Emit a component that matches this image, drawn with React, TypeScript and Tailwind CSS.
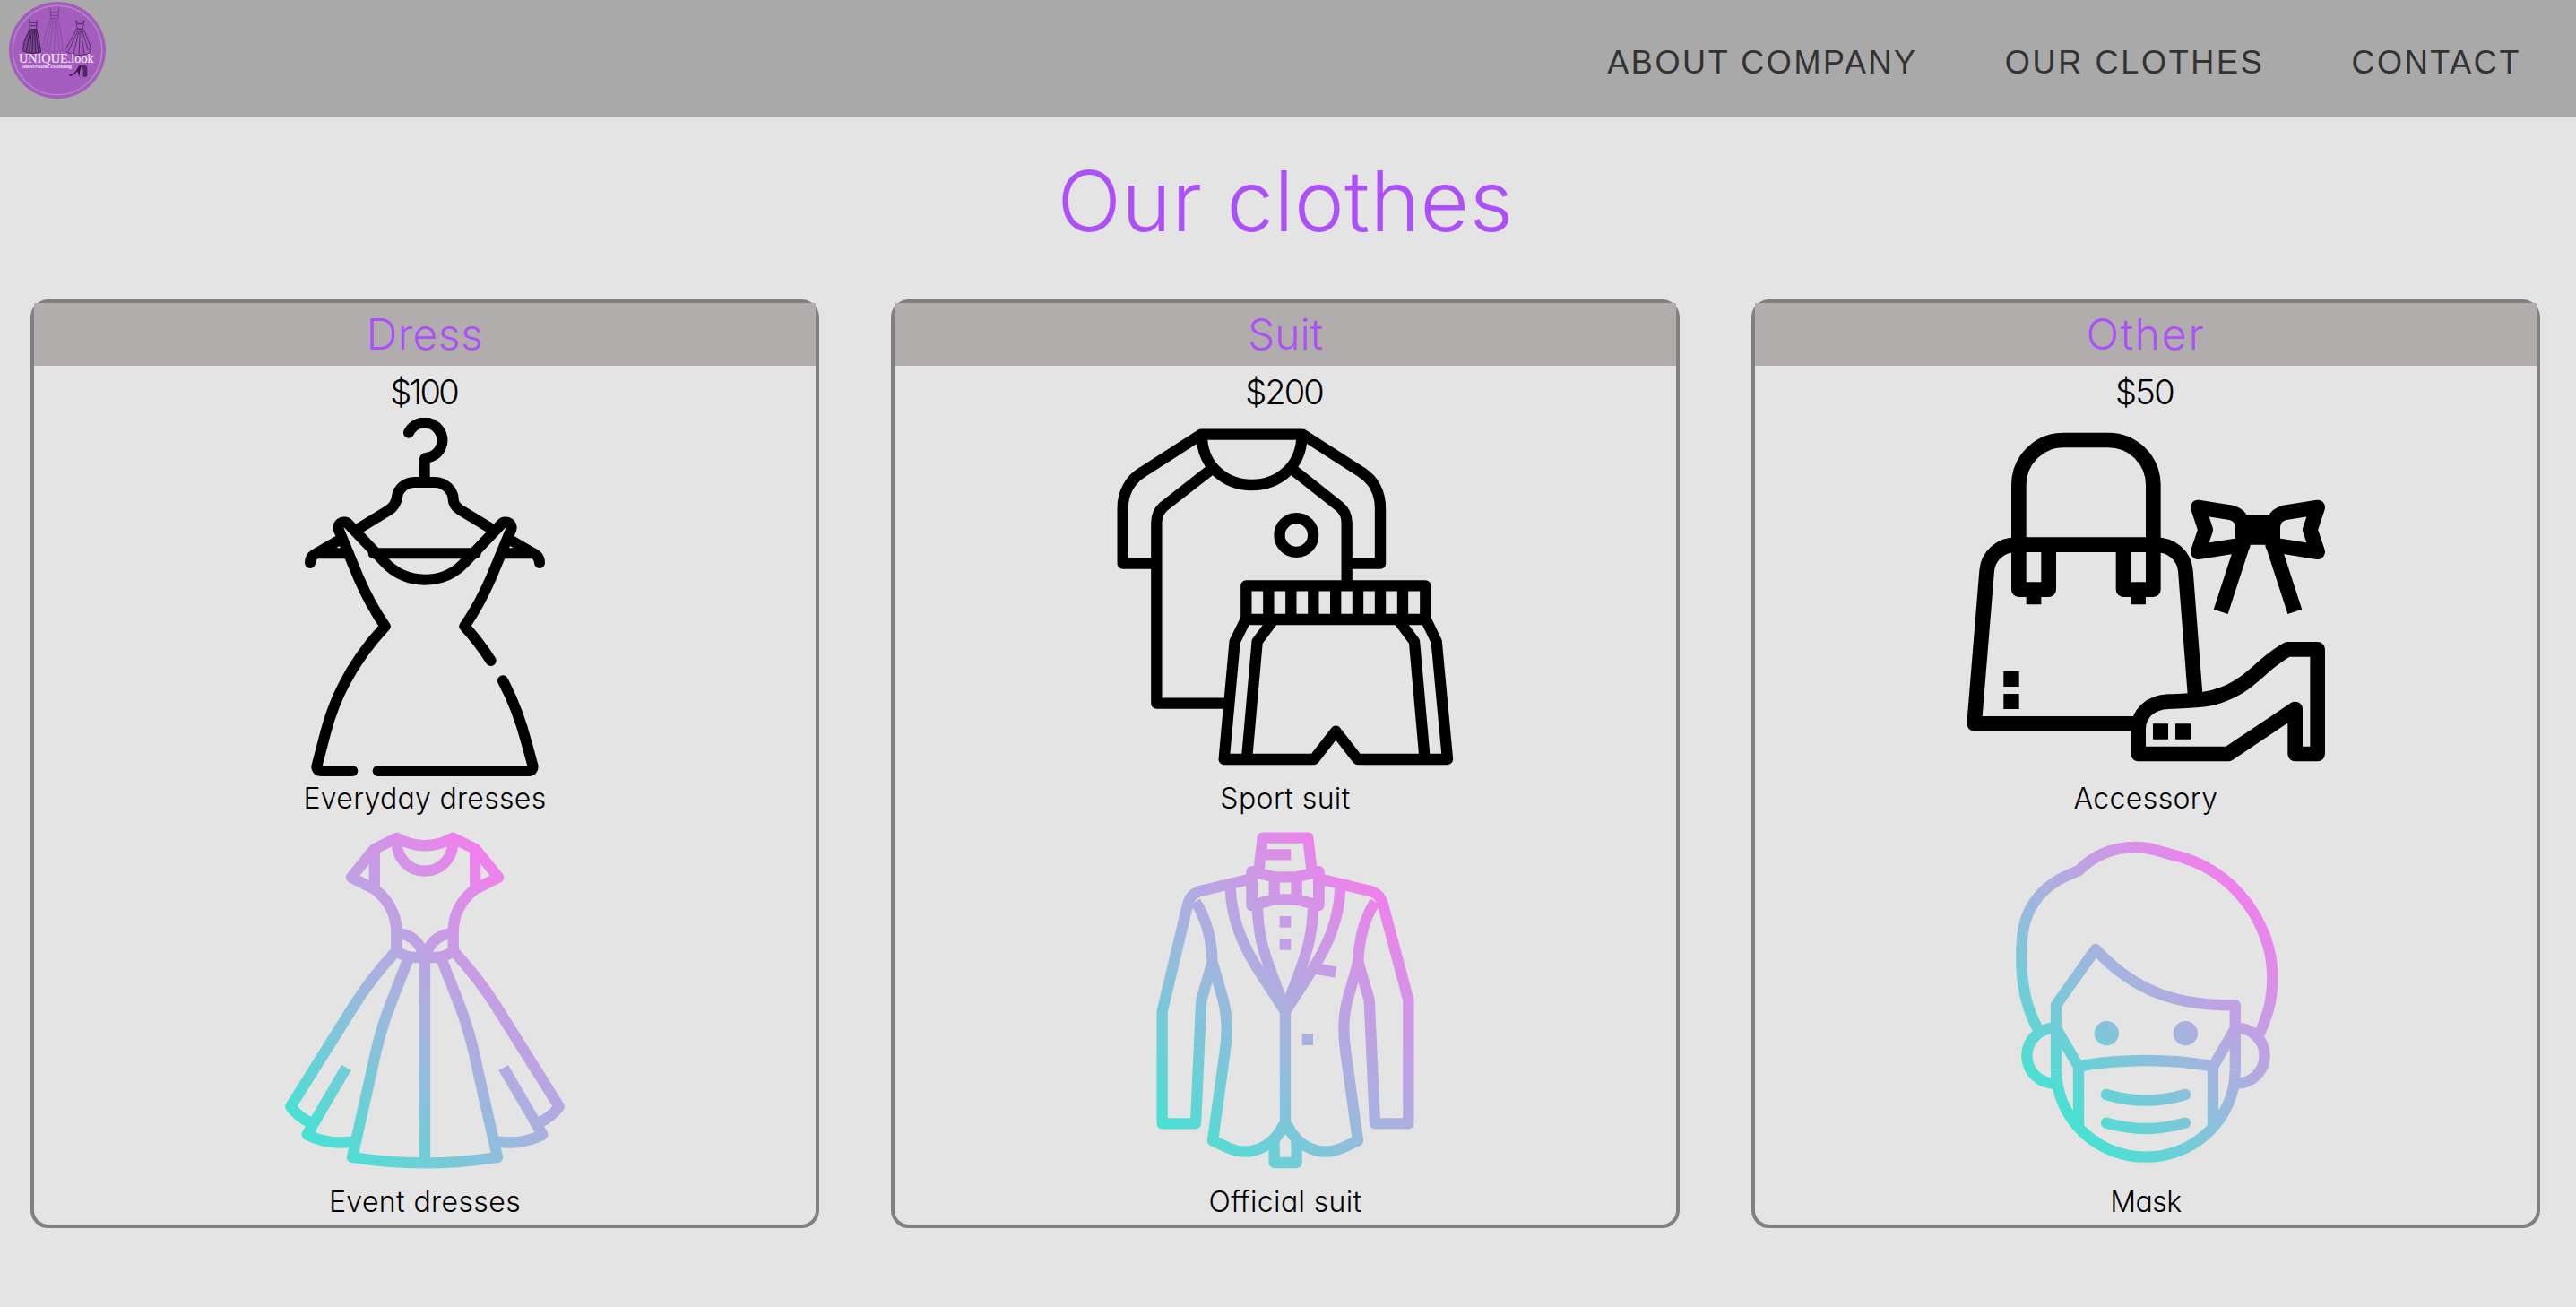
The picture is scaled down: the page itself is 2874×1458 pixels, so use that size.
import React from "react";

type GradientProps = { id: string; x1: number; y1: number; x2: number; y2: number };

function IconGradient({ id, x1, y1, x2, y2 }: GradientProps) {
  return (
    <defs>
      <linearGradient id={id} gradientUnits="userSpaceOnUse" x1={x1} y1={y1} x2={x2} y2={y2}>
        <stop offset="0" stopColor="#46e2d2" />
        <stop offset="0.5" stopColor="#a6b3df" />
        <stop offset="1" stopColor="#f080ec" />
      </linearGradient>
    </defs>
  );
}

function HangerDressIcon() {
  return (
    <svg className="size-[400px]" viewBox="-78 48 1200 1200" fill="none" stroke="#000" strokeWidth="36" strokeLinecap="round" strokeLinejoin="round">
      <path d="M468 98A59 59 0 1 1 528 182Q521 182 521 190V262" />
      <path d="M292 424L400 358C418 347 427 330 429 312C433 285 457 264 487 264H555C590 264 617 292 617 322C618 335 626 347 638 355L752 424" />
      <path d="M236 457L152 506Q138 516 138 534M160 502H266M350 502H692M780 502H886M808 457L892 506Q906 516 906 534" />
      <path d="M389 746Q340 675 300 583L236 428A19 19 0 0 1 267 405L386 530C460 610 584 610 658 530L777 405A19 19 0 0 1 808 428L744 583Q704 675 655 746Q702 797 743 861" />
      <path d="M389 746Q241 905 190 1100L160 1215Q160 1230 175 1230H280" />
      <path d="M783 928Q833 1022 863 1138L884 1215Q884 1230 870 1230H365" />
    </svg>
  );
}

function EventDressIcon() {
  return (
    <svg className="size-[400px]" viewBox="-78 18 1200 1200" fill="none" stroke="url(#g-dress)" strokeWidth="37" strokeLinejoin="round">
      <IconGradient id="g-dress" x1={90} y1={1050} x2={865} y2={275} />
      <path d="M428 74Q522 126 616 74L692 112L768 206L691 245Q617 302 617 390V452Q590 474 556 474H488Q455 474 427 452V390Q427 302 353 245L276 206L352 112Z" />
      <path d="M353.5 110V246M690.5 110V246M429 92A93 93 0 0 0 615 92" />
      <path d="M428 394C470 394 500 418 518 462M616 394C574 394 544 418 526 462" />
      <path d="M427 452Q345 540 285 635L73 973Q98 1008 136 1025" />
      <path d="M617 452Q699 540 759 635L971 973Q946 1008 908 1025" />
      <path d="M259 843L128 1067Q195 1102 280 1091M785 843L916 1067Q849 1102 764 1091" />
      <path d="M465 483L412 618Q370 722 345 850L279 1143Q522 1181 765 1143L699 850Q674 722 632 618L579 483" />
      <path d="M522 460V1162" />
    </svg>
  );
}

function SportSuitIcon() {
  return (
    <svg className="size-[400px]" viewBox="12 18 1200 1200" fill="none" stroke="#000" strokeWidth="37" strokeLinejoin="round">
      <path d="M181 506H68V320C68 270 92 225 134 200L330 74H670L866 200C908 225 930 270 930 320V506H818" />
      <path d="M360 194L205 315Q181 335 181 370V974H420M640 194L793 315Q818 335 818 370V580" />
      <path d="M333 88C338 180 410 243 500 243C590 243 662 180 667 88" />
      <circle cx="649" cy="411" r="56.5" />
      <path d="M481 580H1081V693H481ZM556 580V693M631 580V693M706 580V693M780.500 580V693M855 580V693M930 580V693M1005 580V693" />
      <path d="M481 690L443 767L407 1161H708L781 1067L854 1161H1155L1118 767L1081 690" />
      <path d="M568 700L518 767L483 1161M994 700L1044 767L1079 1161" />
    </svg>
  );
}

function JacketIcon() {
  return (
    <svg className="size-[400px]" viewBox="-108 18 1200 1200" fill="none" stroke="url(#g-jacket)" strokeWidth="37" strokeLinejoin="round">
      <IconGradient id="g-jacket" x1={68} y1={1042} x2={835} y2={275} />
      <path d="M403 190L416 74H568L581 190M415 130H511" />
      <path d="M380 187L455 205H530L604 187V300L530 280H455L380 300ZM455 205V280M530 205V280" />
      <path d="M380 187V300M604 187V300" strokeLinecap="round" />
      <path d="M370 213L204 253Q172 265 165 298L80 655V1030H192L211 617L248 490" />
      <path d="M614 213L780 253Q812 265 819 298L904 617V1030H792L773 617L736 490" />
      <path d="M191 288C235 355 246 430 248 490L285 620Q304 700 290 790L249 1087L302 1112C375 1143 445 1110 480 1045L492 1028" />
      <path d="M793 288C749 355 738 430 736 490L699 620Q680 700 694 790L735 1087L682 1112C609 1143 539 1110 504 1045L492 1028" />
      <path d="M455 1161V1084L492 1036L530 1084V1161ZM492 640V1045" />
      <path d="M308 244C313 350 350 430 392 500L492 655L592 500C634 430 671 350 676 244" />
      <path d="M399 310C402 400 420 455 440 512L492 650L544 512C564 455 582 400 585 310" />
      <path d="M596 512L661 524" />
      <path d="M473 336h38v38h-38ZM473 411h38v38h-38ZM548 730h37v38h-37Z" fill="url(#g-jacket)" stroke="none" />
    </svg>
  );
}

function AccessoryIcon() {
  return (
    <svg className="size-[400px]" viewBox="42 18 1200 1200" fill="none" stroke="#000" strokeWidth="50" strokeLinejoin="round">
      <path d="M217 443V243A150 150 0 0 1 367 93H517A150 150 0 0 1 667 243V443" />
      <path d="M217 443V593H317V443M567 443V593H667V443" />
      <path d="M620 1042H68L110 530C114 480 155 443 210 443H674C729 443 771 480 775 530L808 955" />
      <path d="M617 1143V1060C617 1010 655 970 718 968C800 964 850 965 905 942C1000 905 1030 840 1117 793H1217V1143H1142V993L918 1143Z" />
      <path d="M817 318L925 335C955 342 967 362 967 385V443L817 467L842 393Z" />
      <path d="M1217 318L1109 335C1079 342 1067 362 1067 385V443L1217 467L1192 393Z" />
      <path d="M967 440L893 667M1067 440L1141 667" />
      <path d="M242 610h50v33h-50ZM592 610h50v33h-50ZM166 867h52v51h-52ZM166 942h52v51h-52ZM666 1042h51v52h-51ZM741 1042h51v52h-51Z" fill="#000" stroke="none" />
      <rect x="942" y="342" width="150" height="101" rx="20" fill="#000" stroke="none" />
    </svg>
  );
}

function MaskIcon() {
  return (
    <svg className="size-[400px]" viewBox="-78 18 1200 1200" fill="none" stroke="url(#g-mask)" strokeWidth="37" strokeLinejoin="round">
      <IconGradient id="g-mask" x1={185} y1={955} x2={870} y2={270} />
      <path d="M160 712C120 640 106 560 106 480C106 400 110 350 145 295C180 240 225 212 297 184C355 125 420 105 488 105C540 105 560 118 620 133C815 180 946 360 946 540C946 620 930 665 903 730" />
      <path d="M222 850V633L354 447C490 595 640 636 821.500 634V850" />
      <path d="M222 850C222 1010 355 1142 522 1142C689 1142 821.500 1010 821.500 850" />
      <path d="M222 711L297 840V1045M822 711L747 840V1045M297 838Q522 800 747 838" />
      <path d="M390 933Q522 973 654 933M390 1028Q522 1066 654 1028" strokeLinecap="round" />
      <path d="M218 710A94 93 0 0 0 218 896M826 710A94 93 0 0 1 826 896" />
      <path d="M350 728a41 41 0 1 0 82 0a41 41 0 1 0 -82 0ZM614 728a41 41 0 1 0 82 0a41 41 0 1 0 -82 0Z" fill="url(#g-mask)" stroke="none" />
    </svg>
  );
}

function Logo() {
  return (
    <svg className="size-[110px]" viewBox="27 3 330 330" fill="none">
      <circle cx="192" cy="168" r="162" fill="#a45dbe" />
      <circle cx="192" cy="168" r="149" stroke="#b592c4" strokeWidth="4" />
      <g stroke="#3b1d4d" strokeLinejoin="round">
        <path d="M98 66l2 20h22l2-20M100 86l-1 14h24l-1-14M99 76h24" strokeWidth="2.500" />
        <path d="M99 98L82 136L76 170Q105 184 137 174L130 130L122 98Z" fill="#7c4594" strokeWidth="3" />
        <path d="M101 100L88 172M106 100L98 176M111 100L108 178M115 100L119 176M119 100L129 174" strokeWidth="3" />
        <path d="M254 68l5 28h18l5-28l-13 14ZM256 80h24" strokeWidth="2" />
        <path d="M256 98L236 136L216 170Q256 194 300 178L301 150L280 98ZM260 104L228 172M264 104L246 180M268 104L264 184M272 104L282 182M276 104L295 168" strokeWidth="2.200" />
      </g>
      <path d="M168 26l2 36h25l2-36M168 40h28M170 52h26" stroke="#5d3172" strokeWidth="2" />
      <path d="M170 62L154 110L141 164Q175 182 210 168L203 110L195 62ZM174 66L152 166M179 66L166 170M184 66L182 172M189 66L199 168" stroke="#7b4593" strokeWidth="2" />
      <path d="M231 250q18 2 32-28l14-8q-12 22-11 40l-2 2q-2-14-5-18q-12 18-28 16Z" fill="#351844" />
      <path d="M274 222q14-14 18 6v26q-7 6-15 2q4-18-3-34Z" fill="#4f2a62" />
      <text x="63" y="211" fill="#f4e9f8" fontFamily="Liberation Serif, serif" fontSize="46" textLength="251" lengthAdjust="spacingAndGlyphs" stroke="#f4e9f8" strokeWidth="0.600">UNIQUE.look</text>
      <text x="72" y="229" fill="#efe0f5" fontFamily="Liberation Serif, serif" fontWeight="bold" fontSize="20" textLength="169" lengthAdjust="spacingAndGlyphs">showroom clothing</text>
    </svg>
  );
}

type Item = { label: string; tracking: string; icon: React.ReactNode };
type Card = { title: string; titleTracking: string; price: string; priceTracking: string; items: Item[] };

const cards: Card[] = [
  {
    title: "Dress",
    titleTracking: "tracking-[0.4px]",
    price: "$100",
    priceTracking: "tracking-[-2.8px]",
    items: [
      { label: "Everyday dresses", tracking: "tracking-[0.3px]", icon: <HangerDressIcon /> },
      { label: "Event dresses", tracking: "tracking-[0.4px]", icon: <EventDressIcon /> },
    ],
  },
  {
    title: "Suit",
    titleTracking: "tracking-[0px]",
    price: "$200",
    priceTracking: "tracking-[-2px]",
    items: [
      { label: "Sport suit", tracking: "tracking-[0.4px]", icon: <SportSuitIcon /> },
      { label: "Official suit", tracking: "tracking-[0.35px]", icon: <JacketIcon /> },
    ],
  },
  {
    title: "Other",
    titleTracking: "tracking-[1.8px]",
    price: "$50",
    priceTracking: "tracking-[-1.6px]",
    items: [
      { label: "Accessory", tracking: "tracking-[0.37px]", icon: <AccessoryIcon /> },
      { label: "Mask", tracking: "tracking-[-0.5px]", icon: <MaskIcon /> },
    ],
  },
];

const links = [
  { label: "ABOUT COMPANY", tracking: "tracking-[2.6px]" },
  { label: "OUR CLOTHES", tracking: "tracking-[2.7px]" },
  { label: "CONTACT", tracking: "tracking-[2.6px]" },
];

export default function App() {
  return (
    <div className="h-[1458px] w-[2874px] overflow-hidden bg-[#e4e4e4] font-['Inter','Noto_Sans',sans-serif] font-light text-black [font-feature-settings:'cv11']">
      <header className="flex h-[130px] items-start justify-between bg-[#a9a9a9] pr-[61px] pl-[9px]">
        <a href="#" className="mt-px block">
          <Logo />
        </a>
        <nav className="flex h-full items-center gap-[97px] pt-[9px] font-['Liberation_Sans',sans-serif] text-[36px] leading-none font-normal text-[#333]">
          {links.map((link) => (
            <a key={link.label} href="#" className={`whitespace-nowrap ${link.tracking}`}>
              {link.label}
            </a>
          ))}
        </nav>
      </header>
      <main className="pr-10 pl-[34px]">
        <h1 className="flex h-[188px] items-center justify-center text-[94px] tracking-[0.5px] text-[#ad50f9]">Our clothes</h1>
        <section className="mt-4 grid grid-cols-3 gap-20">
          {cards.map((card) => (
            <article key={card.title} className="flex h-[1036px] flex-col items-center rounded-[20px] border-4 border-[#808080]">
              <h2 className={`flex h-[70px] w-full items-center justify-center bg-[#b1adac] text-[48px] text-[#ad50f9] ${card.titleTracking}`}>
                {card.title}
              </h2>
              <p className={`flex h-[58px] items-center pr-[3px] text-[38px] ${card.priceTracking}`}>{card.price}</p>
              {card.items.map((item) => (
                <figure key={item.label} className="flex flex-col items-center">
                  {item.icon}
                  <figcaption className={`flex h-[50px] items-center text-[32px] ${item.tracking}`}>{item.label}</figcaption>
                </figure>
              ))}
            </article>
          ))}
        </section>
      </main>
    </div>
  );
}
